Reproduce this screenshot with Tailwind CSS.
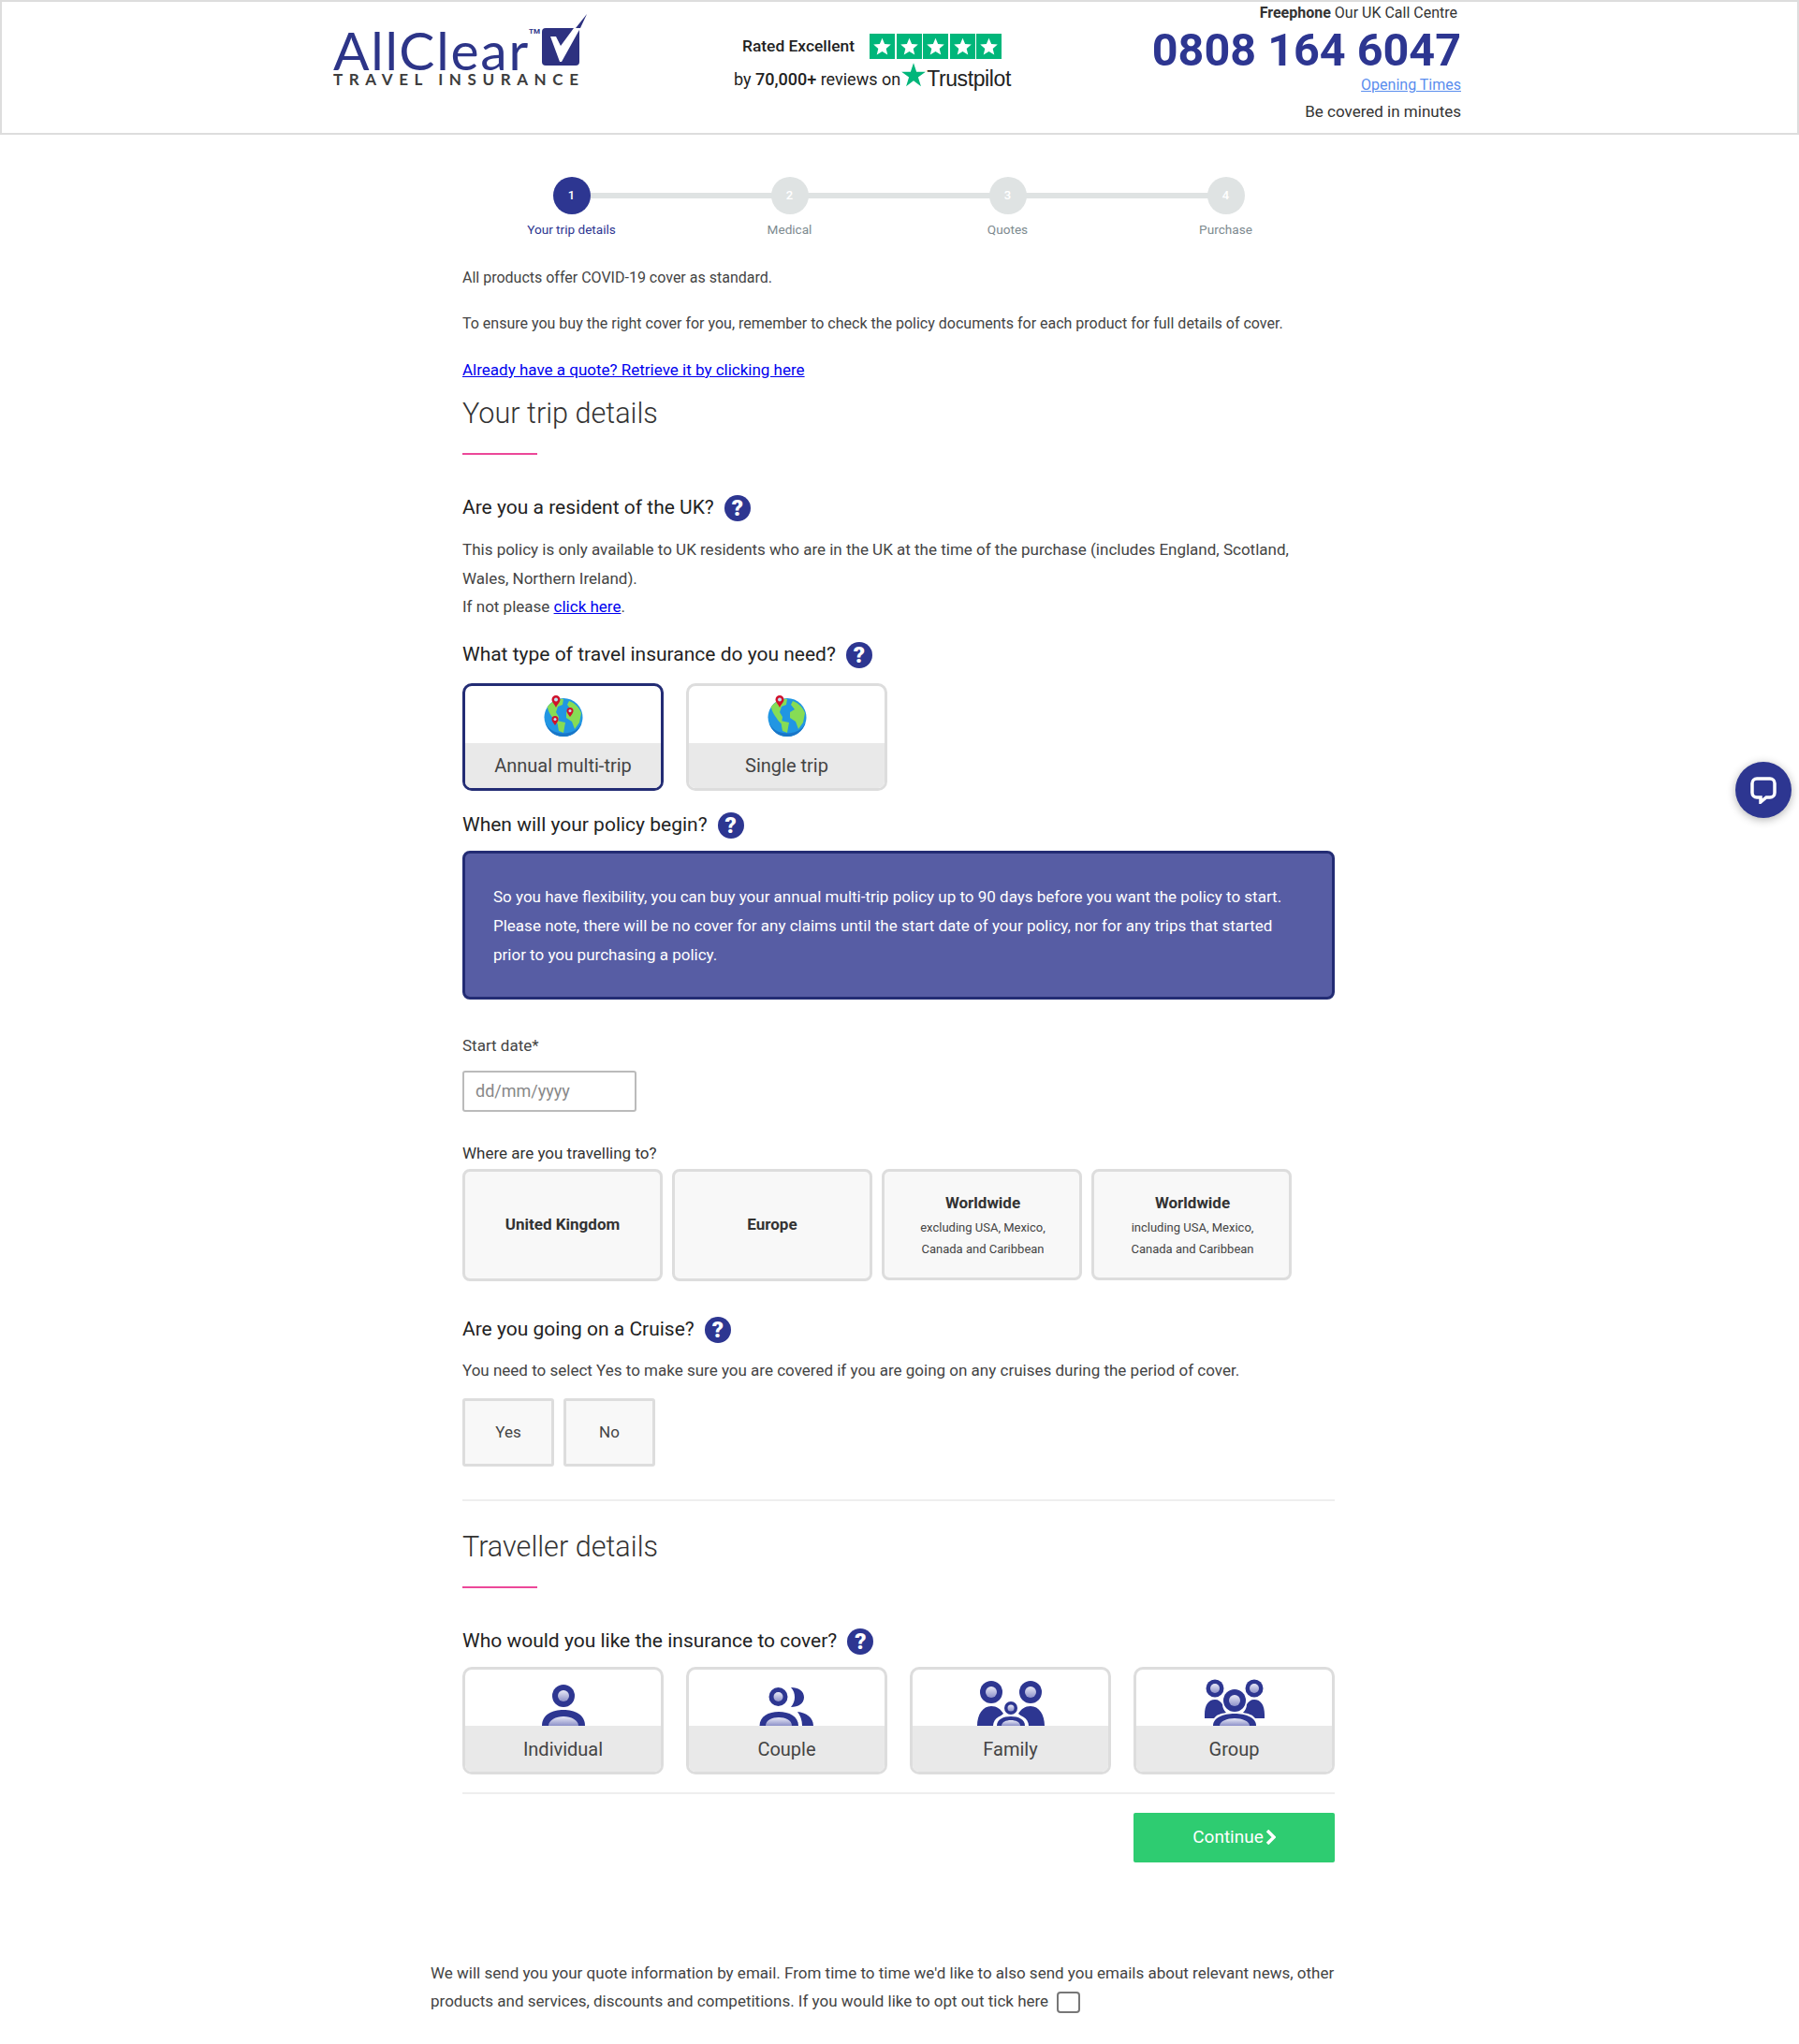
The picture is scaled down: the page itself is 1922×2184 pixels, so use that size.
<!DOCTYPE html>
<html lang="en">
<head>
    <meta charset="UTF-8">
    <title>AllClear Travel Insurance</title>
    <script src="https://cdn.jsdelivr.net/npm/@tailwindcss/browser@4"></script>
</head>
<body class="bg-white font-['Roboto',sans-serif] text-[#444] text-[16px]">
    <!-- Header -->
    <header class="h-[144px] border-2 border-[#ddd] flex relative">
        <div class="ml-[354px] mt-[13px] w-[275px]">
            <div class="flex items-start h-[62px]">
                <span class="font-['Lato',sans-serif] text-[57px] leading-[48px] tracking-[1.8px] text-[#2d3588] mt-[14px]">AllClear</span>
                <span class="text-[8px] leading-[10px] font-bold text-[#2d3588] mt-[14px] -ml-[1px] w-[12px]">TM</span>
                <svg class="shrink-0" width="50" height="58" viewBox="0 0 50 58">
                    <rect x="2" y="15" width="40" height="40" rx="4" fill="#2d3180"/>
                    <path d="M11 24 L17 24 L22 34 L36 15 L43 15 L23 51 L21 51 Z" fill="#fff"/>
                    <path d="M38 15 L50 0 L43 15 Z" fill="#2d3180"/>
                </svg>
            </div>
            <div class="text-[17px] leading-[15px] font-bold tracking-[6.600px] text-[#3d3d3d] font-['Lato',sans-serif] whitespace-nowrap">TRAVEL INSURANCE</div>
        </div>
        <div class="ml-[153px] mt-[33px] w-[300px]">
            <div class="flex items-center h-[29px]">
                <span class="ml-[9px] text-[17.400px] font-medium text-[#222] w-[136px] whitespace-nowrap">Rated Excellent</span>
                <div class="flex gap-[1.5px]">
                    <span class="w-[27px] h-[27px] bg-[#00b67a] flex items-center justify-center"><svg width="21" height="21" viewBox="0 0 24 24"><path d="M12 2l3 7.2 7.6.6-5.8 5 1.8 7.4-6.6-4-6.6 4 1.8-7.4-5.8-5 7.6-.6z" fill="#fff"/></svg></span>
                    <span class="w-[27px] h-[27px] bg-[#00b67a] flex items-center justify-center"><svg width="21" height="21" viewBox="0 0 24 24"><path d="M12 2l3 7.2 7.6.6-5.8 5 1.8 7.4-6.6-4-6.6 4 1.8-7.4-5.8-5 7.6-.6z" fill="#fff"/></svg></span>
                    <span class="w-[27px] h-[27px] bg-[#00b67a] flex items-center justify-center"><svg width="21" height="21" viewBox="0 0 24 24"><path d="M12 2l3 7.2 7.6.6-5.8 5 1.8 7.4-6.6-4-6.6 4 1.8-7.4-5.8-5 7.6-.6z" fill="#fff"/></svg></span>
                    <span class="w-[27px] h-[27px] bg-[#00b67a] flex items-center justify-center"><svg width="21" height="21" viewBox="0 0 24 24"><path d="M12 2l3 7.2 7.6.6-5.8 5 1.8 7.4-6.6-4-6.6 4 1.8-7.4-5.8-5 7.6-.6z" fill="#fff"/></svg></span>
                    <span class="w-[27px] h-[27px] bg-[#00b67a] flex items-center justify-center"><svg width="21" height="21" viewBox="0 0 24 24"><path d="M12 2l3 7.2 7.6.6-5.8 5 1.8 7.4-6.6-4-6.6 4 1.8-7.4-5.8-5 7.6-.6z" fill="#fff"/></svg></span>
                </div>
            </div>
            <div class="flex items-center h-[28px] mt-[6px] text-[18px] text-[#222] whitespace-nowrap">
                <span>by <b class="font-medium">70,000+</b> reviews on</span>
                <svg class="-mt-[9px] shrink-0" width="28" height="28" viewBox="0 0 24 24"><path d="M12 1l2.7 8.2H23l-6.8 5 2.6 8.3-6.8-5.1-6.8 5.1 2.6-8.3-6.8-5h8.3z" fill="#00b67a"/></svg>
                <span class="font-['Liberation_Sans',sans-serif] text-[23px] tracking-[-0.4px]">Trustpilot</span>
            </div>
        </div>
        <div class="absolute left-[1100px] top-0 w-[459px] text-right">
            <div class="text-[16px] leading-[24px] text-[#333] pr-[4px]"><b class="font-bold">Freephone</b> Our UK Call Centre</div>
            <div class="text-[48.500px] leading-[50px] mt-[3px] font-bold text-[#2d3691]">0808 164 6047</div>
            <a class="block text-[16px] leading-[24px] underline text-[#5a8dee]" href="#">Opening Times</a>
            <div class="text-[17px] leading-[24px] mt-[4px] text-[#333]">Be covered in minutes</div>
        </div>
    </header>

    <main class="w-[932px] ml-[494px]">
        <!-- Stepper -->
        <div class="relative h-[103px] pt-[45px]">
            <div class="absolute left-[116px] right-[116px] top-[62px] h-[6px] bg-[#dfe3e3]"></div>
            <div class="relative grid grid-cols-4 text-center text-[13.600px] leading-[20px]">
                <div><div class="w-[40px] h-[40px] mx-auto rounded-full bg-[#2d3691] text-white text-[13px] font-medium flex items-center justify-center">1</div><div class="mt-[6px] text-[#2d3691]">Your trip details</div></div>
                <div><div class="w-[40px] h-[40px] mx-auto rounded-full bg-[#dfe3e3] text-white text-[13px] font-medium flex items-center justify-center">2</div><div class="mt-[6px] text-[#7d8a8f]">Medical</div></div>
                <div><div class="w-[40px] h-[40px] mx-auto rounded-full bg-[#dfe3e3] text-white text-[13px] font-medium flex items-center justify-center">3</div><div class="mt-[6px] text-[#7d8a8f]">Quotes</div></div>
                <div><div class="w-[40px] h-[40px] mx-auto rounded-full bg-[#dfe3e3] text-white text-[13px] font-medium flex items-center justify-center">4</div><div class="mt-[6px] text-[#7d8a8f]">Purchase</div></div>
            </div>
        </div>

        <p class="mt-[38px] leading-[24px]">All products offer COVID-19 cover as standard.</p>
        <p class="mt-[25px] leading-[24px]">To ensure you buy the right cover for you, remember to check the policy documents for each product for full details of cover.</p>
        <p class="mt-[25px] leading-[24px] text-[17px]"><a href="#" class="text-[#0000ee] underline">Already have a quote? Retrieve it by clicking here</a></p>

        <h2 class="mt-[15px] text-[30.600px] leading-[40px] font-light text-[#333]">Your trip details</h2>
        <div class="mt-[22px] w-[80px] h-[2px] bg-[#ec4899]"></div>

        <div class="mt-[40px] flex items-center gap-[11px] h-[34px] text-[21px] text-[#222]">Are you a resident of the UK? <span class="w-[28px] h-[28px] rounded-full bg-[#2d3691] text-white font-black text-[24px] flex items-center justify-center">?</span></div>
        <p class="mt-[12px] text-[17px] leading-[30.500px] w-[900px]">This policy is only available to UK residents who are in the UK at the time of the purchase (includes England, Scotland, Wales, Northern Ireland).<br>If not please <a href="#" class="text-[#0000ee] underline">click here</a>.</p>

        <div class="mt-[19px] flex items-center gap-[11px] h-[34px] text-[21px] text-[#222]">What type of travel insurance do you need? <span class="w-[28px] h-[28px] rounded-full bg-[#2d3691] text-white font-black text-[24px] flex items-center justify-center">?</span></div>

        <div class="mt-[13px] flex gap-[24px]">
            <div class="w-[215px] h-[115px] rounded-[10px] border-[3px] border-[#232c74] overflow-hidden flex flex-col">
                <div class="h-[61px] flex justify-center pt-[10px]">
                    <svg width="44" height="46" viewBox="0 0 44 46">
                        <circle cx="22" cy="23.500" r="20.500" fill="#2196e3"/>
                        <path d="M22 44a20.500 20.500 0 0 0 20.500-20.500c0 11-10 17-20.500 17S5 35 2.500 29c3 9 10 15 19.500 15z" fill="#1976c8"/>
                        <path d="M5 12c5-6 12-9 17-8l-1 6-5 2-2 6 3 5-1 7c-3-1-5-6-7-8-2-3-4-7-4-10z" fill="#86dc55"/>
                        <path d="M15 27l9 2-2 11-5-2z" fill="#86dc55"/>
                        <path d="M28 6c6 2 11 7 13 13l-2 10-5 7-3-8-6-4 0-6 5-3-4-5z" fill="#86dc55"/>
                        <path d="M14 0a4.500 4.500 0 0 1 4.500 4.500c0 3-3 5-4.500 8.500-1.500-3.500-4.500-5.500-4.500-8.500A4.500 4.500 0 0 1 14 0z" fill="#d0112b"/><circle cx="14" cy="4.500" r="2" fill="#bfe3f5"/>
                        <path d="M29 13a3.500 3.500 0 0 1 3.500 3.500c0 2.500-2 4-3.500 6.500-1.500-2.500-3.500-4-3.500-6.500A3.500 3.500 0 0 1 29 13z" fill="#d0112b"/><circle cx="29" cy="16.500" r="1.500" fill="#bfe3f5"/>
                        <path d="M13 22a3.500 3.500 0 0 1 3.500 3.500c0 2.500-2 4-3.500 6.500-1.500-2.500-3.500-4-3.500-6.500A3.500 3.500 0 0 1 13 22z" fill="#d0112b"/><circle cx="13" cy="25.500" r="1.500" fill="#bfe3f5"/>
                    </svg>
                </div>
                <div class="flex-1 bg-[#e9e9e9] flex items-center justify-center text-[20px] text-[#444]">Annual multi-trip</div>
            </div>
            <div class="w-[215px] h-[115px] rounded-[10px] border-[3px] border-[#ddd] overflow-hidden flex flex-col">
                <div class="h-[61px] flex justify-center pt-[10px]">
                    <svg width="44" height="46" viewBox="0 0 44 46">
                        <circle cx="22" cy="23.500" r="20.500" fill="#2196e3"/>
                        <path d="M22 44a20.500 20.500 0 0 0 20.500-20.500c0 11-10 17-20.500 17S5 35 2.500 29c3 9 10 15 19.500 15z" fill="#1976c8"/>
                        <path d="M5 12c5-6 12-9 17-8l-1 6-5 2-2 6 3 5-1 7c-3-1-5-6-7-8-2-3-4-7-4-10z" fill="#86dc55"/>
                        <path d="M15 27l9 2-2 11-5-2z" fill="#86dc55"/>
                        <path d="M28 6c6 2 11 7 13 13l-2 10-5 7-3-8-6-4 0-6 5-3-4-5z" fill="#86dc55"/>
                        <path d="M14 0a4.500 4.500 0 0 1 4.500 4.500c0 3-3 5-4.500 8.500-1.500-3.500-4.500-5.500-4.500-8.500A4.500 4.500 0 0 1 14 0z" fill="#d0112b"/><circle cx="14" cy="4.500" r="2" fill="#bfe3f5"/>
                    </svg>
                </div>
                <div class="flex-1 bg-[#e9e9e9] flex items-center justify-center text-[20px] text-[#444]">Single trip</div>
            </div>
        </div>

        <div class="mt-[20px] flex items-center gap-[11px] h-[34px] text-[21px] text-[#222]">When will your policy begin? <span class="w-[28px] h-[28px] rounded-full bg-[#2d3691] text-white font-black text-[24px] flex items-center justify-center">?</span></div>

        <div class="mt-[10px] h-[159px] rounded-[8px] border-[3px] border-[#232c74] bg-[#575da4] text-white text-[17px] leading-[31px] pl-[30px] pt-[31px] pr-[40px]">
            So you have flexibility, you can buy your annual multi-trip policy up to 90 days before you want the policy to start. Please note, there will be no cover for any claims until the start date of your policy, nor for any trips that started prior to you purchasing a policy.
        </div>

        <div class="mt-[37px] text-[17px] leading-[24px]">Start date*</div>
        <div class="mt-[15px] w-[186px] h-[44px] rounded-[3px] border-2 border-[#bbb] pl-[12px] flex items-center text-[18px] text-[#888]">dd/mm/yyyy</div>

        <div class="mt-[32px] text-[17px] leading-[24px] text-[#333]">Where are you travelling to?</div>
        <div class="mt-[5px] flex gap-[10px] items-start">
            <div class="w-[214px] h-[120px] rounded-[8px] border-[3px] border-[#ddd] bg-[#f8f8f8] flex items-center justify-center text-[17px] font-bold text-[#333]">United Kingdom</div>
            <div class="w-[214px] h-[120px] rounded-[8px] border-[3px] border-[#ddd] bg-[#f8f8f8] flex items-center justify-center text-[17px] font-bold text-[#333]">Europe</div>
            <div class="w-[214px] h-[119px] rounded-[8px] border-[3px] border-[#ddd] bg-[#f8f8f8] text-center pt-[21px] pl-[2px]"><div class="text-[17px] leading-[24px] font-bold text-[#333]">Worldwide</div><div class="text-[13px] leading-[23px] mt-[3px]">excluding USA, Mexico,<br>Canada and Caribbean</div></div>
            <div class="w-[214px] h-[119px] rounded-[8px] border-[3px] border-[#ddd] bg-[#f8f8f8] text-center pt-[21px] pl-[2px]"><div class="text-[17px] leading-[24px] font-bold text-[#333]">Worldwide</div><div class="text-[13px] leading-[23px] mt-[3px]">including USA, Mexico,<br>Canada and Caribbean</div></div>
        </div>

        <div class="mt-[35px] flex items-center gap-[11px] h-[34px] text-[21px] text-[#222]">Are you going on a Cruise? <span class="w-[28px] h-[28px] rounded-full bg-[#2d3691] text-white font-black text-[24px] flex items-center justify-center">?</span></div>
        <p class="mt-[14px] text-[17px] leading-[24px]">You need to select Yes to make sure you are covered if you are going on any cruises during the period of cover.</p>
        <div class="mt-[18px] flex gap-[10px]">
            <div class="w-[98px] h-[73px] rounded-[3px] border-[3px] border-[#ddd] bg-[#f8f8f8] flex items-center justify-center text-[17px] pt-[2px]">Yes</div>
            <div class="w-[98px] h-[73px] rounded-[3px] border-[3px] border-[#ddd] bg-[#f8f8f8] flex items-center justify-center text-[17px] pt-[2px]">No</div>
        </div>

        <div class="mt-[35px] h-[2px] bg-[#eee]"></div>

        <h2 class="mt-[29px] text-[30.600px] leading-[40px] font-light text-[#333]">Traveller details</h2>
        <div class="mt-[22px] w-[80px] h-[2px] bg-[#ec4899]"></div>

        <div class="mt-[40px] flex items-center gap-[11px] h-[34px] text-[21px] text-[#222]">Who would you like the insurance to cover? <span class="w-[28px] h-[28px] rounded-full bg-[#2d3691] text-white font-black text-[24px] flex items-center justify-center">?</span></div>

        <div class="mt-[10px] flex gap-[24px]">
            <div class="w-[215px] h-[115px] rounded-[10px] border-[3px] border-[#ddd] overflow-hidden flex flex-col">
                <div class="h-[60px] flex justify-center items-end">
                    <svg width="80" height="50" viewBox="0 0 80 50">
                        <defs><linearGradient id="shine" x1="0" y1="0" x2="0" y2="1"><stop offset="0" stop-color="#e8e9f6"/><stop offset="1" stop-color="#8d91c9"/></linearGradient></defs>
                        <circle cx="40" cy="18" r="12" fill="#2d3691"/><circle cx="40" cy="18" r="6" fill="url(#shine)"/>
                        <path d="M17 50C17 38 28 33 40 33S63 38 63 50Z" fill="#2d3691"/><path d="M24 50C24 44 32 40 40 40S56 44 56 50Z" fill="url(#shine)"/>
                    </svg>
                </div>
                <div class="flex-1 bg-[#e9e9e9] flex items-center justify-center text-[20px] text-[#444] pt-[2px]">Individual</div>
            </div>
            <div class="w-[215px] h-[115px] rounded-[10px] border-[3px] border-[#ddd] overflow-hidden flex flex-col">
                <div class="h-[60px] flex justify-center items-end">
                    <svg width="80" height="50" viewBox="0 0 80 50">
                        <circle cx="30.500" cy="19" r="10" fill="#2d3691"/><circle cx="30.500" cy="19" r="5" fill="url(#shine)"/>
                        <path d="M44 9C52 9 58 13 58 19.500C58 26 52 30 44 30C47 26 48 23 48 19.500C48 16 47 12 44 9Z" fill="#2d3691"/>
                        <path d="M10.500 50C10.500 40 20 35 31 35S52 40 52 50Z" fill="#2d3691"/><path d="M17 50C17 44 24 41 31 41S45 44 45 50Z" fill="url(#shine)"/>
                        <path d="M51 35C60 36 68 41 68 50H56C56 44 54 39 51 35Z" fill="#2d3691"/>
                    </svg>
                </div>
                <div class="flex-1 bg-[#e9e9e9] flex items-center justify-center text-[20px] text-[#444] pt-[2px]">Couple</div>
            </div>
            <div class="w-[215px] h-[115px] rounded-[10px] border-[3px] border-[#ddd] overflow-hidden flex flex-col">
                <div class="h-[60px] flex justify-center items-end">
                    <svg width="80" height="50" viewBox="0 0 80 50">
                        <circle cx="19" cy="14" r="12" fill="#2d3691"/><circle cx="19" cy="14" r="6" fill="url(#shine)"/>
                        <circle cx="61" cy="14" r="12" fill="#2d3691"/><circle cx="61" cy="14" r="6" fill="url(#shine)"/>
                        <path d="M4 50C4 38 10 29 19 29c6 0 10 3 13 8-4 3-6 8-6 13Z" fill="#2d3691"/>
                        <path d="M76 50C76 38 70 29 61 29c-6 0-10 3-13 8 4 3 6 8 6 13Z" fill="#2d3691"/>
                        <circle cx="40" cy="31" r="9" fill="#fff"/>
                        <path d="M21 50C21 42 30 37 40 37S59 42 59 50Z" fill="#fff"/>
                        <circle cx="40" cy="31" r="7" fill="#2d3691"/><circle cx="40" cy="31" r="3.500" fill="url(#shine)"/>
                        <path d="M25 50C25 43 32 40 40 40S55 43 55 50Z" fill="#2d3691"/><path d="M30 50C30 46 35 44 40 44S50 46 50 50Z" fill="url(#shine)"/>
                    </svg>
                </div>
                <div class="flex-1 bg-[#e9e9e9] flex items-center justify-center text-[20px] text-[#444] pt-[2px]">Family</div>
            </div>
            <div class="w-[215px] h-[115px] rounded-[10px] border-[3px] border-[#ddd] overflow-hidden flex flex-col">
                <div class="h-[60px] flex justify-center items-end">
                    <svg width="80" height="50" viewBox="0 0 80 50">
                        <circle cx="19" cy="10" r="9.500" fill="#2d3691"/><circle cx="19" cy="10" r="5" fill="url(#shine)"/>
                        <circle cx="61" cy="10" r="9.500" fill="#2d3691"/><circle cx="61" cy="10" r="5" fill="url(#shine)"/>
                        <path d="M8 38C8 28 12 22 19 22c4 0 6 2 8 5 0 4 2 7 4 9-6 1-10 2-13 6H8Z" fill="#2d3691"/>
                        <path d="M72 38C72 28 68 22 61 22c-4 0-6 2-8 5 0 4-2 7-4 9 6 1 10 2 13 6h10Z" fill="#2d3691"/>
                        <circle cx="40" cy="23" r="12" fill="#2d3691"/><circle cx="40" cy="23" r="6" fill="url(#shine)"/>
                        <path d="M17 50C17 41 28 37 40 37S63 41 63 50Z" fill="#2d3691"/><path d="M24 50C24 45 32 42 40 42S56 45 56 50Z" fill="url(#shine)"/>
                    </svg>
                </div>
                <div class="flex-1 bg-[#e9e9e9] flex items-center justify-center text-[20px] text-[#444] pt-[2px]">Group</div>
            </div>
        </div>

        <div class="mt-[19px] h-[2px] bg-[#eee]"></div>

        <div class="mt-[20px] flex justify-end">
            <a href="#" class="w-[215px] h-[53px] rounded-[2px] bg-[#2ecc71] text-white text-[19px] flex items-center justify-center gap-[2px]">Continue
                <svg width="11" height="16" viewBox="0 0 11 16"><path d="M2 1l7 7-7 7" fill="none" stroke="#fff" stroke-width="3.500"/></svg>
            </a>
        </div>
    </main>

    <p class="ml-[460px] w-[968px] mt-[103px] text-[17px] leading-[30.500px] text-[#444]">We will send you your quote information by email. From time to time we'd like to also send you emails about relevant news, other products and services, discounts and competitions. If you would like to opt out tick here <span class="inline-block align-middle ml-[5px] w-[25px] h-[23px] rounded-[4px] border-2 border-[#777]"></span></p>

    <!-- Chat button -->
    <div class="absolute left-[1854px] top-[814px] w-[60px] h-[60px] rounded-full bg-[#2d3691] shadow-[0_2px_10px_rgba(0,0,0,0.3)] flex items-center justify-center">
        <svg width="30" height="30" viewBox="0 0 30 30"><path d="M8 3h14a5 5 0 0 1 5 5v10a5 5 0 0 1-5 5H18l-6 5v-5H8a5 5 0 0 1-5-5V8a5 5 0 0 1 5-5z" fill="none" stroke="#fff" stroke-width="3.500"/></svg>
    </div>
</body>
</html>
